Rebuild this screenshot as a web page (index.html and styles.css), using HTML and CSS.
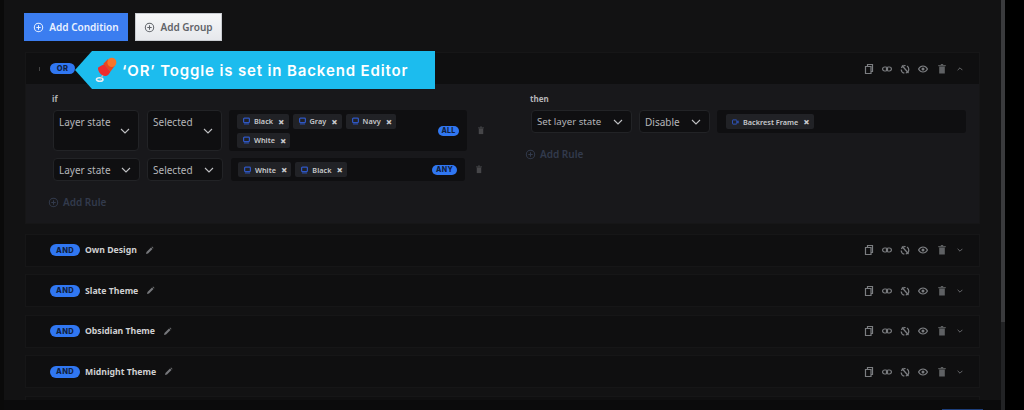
FILE: index.html
```html
<!DOCTYPE html>
<html lang="en">
<head>
    <meta charset="UTF-8">
    <meta name="viewport" content="width=device-width, initial-scale=1.0">
    <title>Conditional Logic</title>
    <link rel="stylesheet" href="styles.css">
</head>
<body>
    <svg class="icon-defs" width="0" height="0">
        <symbol id="i-plus" viewBox="0 0 12 12"><circle cx="6" cy="6" r="4.6" fill="none" stroke="currentColor" stroke-width="1.1"/><path d="M6 3.6v4.8M3.6 6h4.8" stroke="currentColor" stroke-width="1.1"/></symbol>
        <symbol id="i-copy" viewBox="0 0 10 10"><path d="M1.5 2.5h5.5v7h-5.5z" fill="none" stroke="currentColor" stroke-width="1.2"/><path d="M3.5 2.5v-2h5v7h-1.5" fill="none" stroke="currentColor" stroke-width="1.2"/></symbol>
        <symbol id="i-link" viewBox="0 0 10 10"><rect x=".6" y="3" width="5" height="4" rx="2" fill="none" stroke="currentColor" stroke-width="1.2"/><rect x="4.4" y="3" width="5" height="4" rx="2" fill="none" stroke="currentColor" stroke-width="1.2"/></symbol>
        <symbol id="i-nolink" viewBox="0 0 10 10"><circle cx="5" cy="5.3" r="3.8" fill="none" stroke="currentColor" stroke-width="1.2" stroke-dasharray="5 1.5"/><path d="M2 1.5l6.5 7.5" stroke="currentColor" stroke-width="1.2"/><path d="M3.5.8l2 .4-1 1.3z" fill="currentColor"/></symbol>
        <symbol id="i-eye" viewBox="0 0 10 10"><path d="M.5 5c1.2-2 2.8-3 4.5-3s3.3 1 4.5 3c-1.2 2-2.8 3-4.5 3s-3.3-1-4.5-3z" fill="none" stroke="currentColor" stroke-width="1.2"/><circle cx="5" cy="5" r="1.5" fill="currentColor"/></symbol>
        <symbol id="i-trash" viewBox="0 0 10 10"><path d="M2.2 2.5h5.6v7h-5.6z" fill="currentColor" opacity=".75"/><path d="M1.2 1.7h7.6M3.8.6h2.4" stroke="currentColor" stroke-width=".8"/></symbol>
        <symbol id="i-down" viewBox="0 0 10 6"><path d="M1 1l4 4 4-4" fill="none" stroke="currentColor" stroke-width="1.1"/></symbol>
        <symbol id="i-layer" viewBox="0 0 8 8"><rect x=".7" y=".7" width="6.6" height="5.2" rx="1" fill="none" stroke="currentColor" stroke-width="1.4"/><path d="M1 7.4h6" stroke="currentColor" stroke-width="1"/></symbol>
        <symbol id="i-video" viewBox="0 0 9 7"><rect x=".6" y=".8" width="5.6" height="5.4" rx=".6" fill="none" stroke="currentColor" stroke-width="1.2"/><path d="M6.5 3l2-1.5v4l-2-1.5z" fill="currentColor"/></symbol>
        <symbol id="i-pencil" viewBox="0 0 9 9"><path d="M1 8l.5-2 4.5-4.500 1.500 1.500-4.500 4.500z" fill="currentColor"/><path d="M6.500 1l.6-.5 1.400 1.400-.5.6z" fill="currentColor"/></symbol>
    </svg>

    <div class="panel">
        <div class="top-actions">
            <button class="btn btn-primary"><svg class="btn-icon"><use href="#i-plus"/></svg>Add Condition</button>
            <button class="btn btn-light"><svg class="btn-icon"><use href="#i-plus"/></svg>Add Group</button>
        </div>

        <div class="groups">
            <section class="group group-open">
                <header class="group-head">
                    <span class="caret-mini"></span>
                    <span class="pill pill-or">OR</span>
                    <div class="tools">
                        <svg class="tool"><use href="#i-copy"/></svg>
                        <svg class="tool"><use href="#i-link"/></svg>
                        <svg class="tool"><use href="#i-nolink"/></svg>
                        <svg class="tool"><use href="#i-eye"/></svg>
                        <svg class="tool"><use href="#i-trash"/></svg>
                        <svg class="tool tool-caret flip"><use href="#i-down"/></svg>
                    </div>
                </header>
                <div class="group-body">
                    <div class="col col-if">
                        <div class="col-label">if</div>
                        <div class="rule rule-tall">
                            <div class="select select-state"><span>Layer state</span><svg class="chev"><use href="#i-down"/></svg></div>
                            <div class="select select-cond"><span>Selected</span><svg class="chev"><use href="#i-down"/></svg></div>
                            <div class="tagbox">
                                <div class="tags">
                                    <span class="tag"><svg class="tag-icon"><use href="#i-layer"/></svg>Black<b class="x">×</b></span>
                                    <span class="tag"><svg class="tag-icon"><use href="#i-layer"/></svg>Gray<b class="x">×</b></span>
                                    <span class="tag"><svg class="tag-icon"><use href="#i-layer"/></svg>Navy<b class="x">×</b></span>
                                    <span class="tag"><svg class="tag-icon"><use href="#i-layer"/></svg>White<b class="x">×</b></span>
                                </div>
                                <span class="pill pill-all">ALL</span>
                            </div>
                            <svg class="rule-trash"><use href="#i-trash"/></svg>
                        </div>
                        <div class="rule rule-short">
                            <div class="select select-state"><span>Layer state</span><svg class="chev"><use href="#i-down"/></svg></div>
                            <div class="select select-cond"><span>Selected</span><svg class="chev"><use href="#i-down"/></svg></div>
                            <div class="tagbox">
                                <div class="tags">
                                    <span class="tag"><svg class="tag-icon"><use href="#i-layer"/></svg>White<b class="x">×</b></span>
                                    <span class="tag"><svg class="tag-icon"><use href="#i-layer"/></svg>Black<b class="x">×</b></span>
                                </div>
                                <span class="pill pill-any">ANY</span>
                            </div>
                            <svg class="rule-trash"><use href="#i-trash"/></svg>
                        </div>
                        <div class="add-rule"><svg class="btn-icon"><use href="#i-plus"/></svg>Add Rule</div>
                    </div>
                    <div class="col col-then">
                        <div class="col-label">then</div>
                        <div class="rule">
                            <div class="select select-action"><span>Set layer state</span><svg class="chev"><use href="#i-down"/></svg></div>
                            <div class="select select-value"><span>Disable</span><svg class="chev"><use href="#i-down"/></svg></div>
                            <div class="tagbox tagbox-wide">
                                <div class="tags">
                                    <span class="tag"><svg class="tag-icon"><use href="#i-video"/></svg>Backrest Frame<b class="x">×</b></span>
                                </div>
                            </div>
                        </div>
                        <div class="add-rule"><svg class="btn-icon"><use href="#i-plus"/></svg>Add Rule</div>
                    </div>
                </div>
            </section>

            <section class="group">
                <header class="group-head">
                    <span class="pill pill-and">AND</span><span class="group-name">Own Design</span><svg class="pencil"><use href="#i-pencil"/></svg>
                    <div class="tools">
                        <svg class="tool"><use href="#i-copy"/></svg><svg class="tool"><use href="#i-link"/></svg><svg class="tool"><use href="#i-nolink"/></svg><svg class="tool"><use href="#i-eye"/></svg><svg class="tool"><use href="#i-trash"/></svg><svg class="tool tool-caret"><use href="#i-down"/></svg>
                    </div>
                </header>
            </section>
            <section class="group">
                <header class="group-head">
                    <span class="pill pill-and">AND</span><span class="group-name">Slate Theme</span><svg class="pencil"><use href="#i-pencil"/></svg>
                    <div class="tools">
                        <svg class="tool"><use href="#i-copy"/></svg><svg class="tool"><use href="#i-link"/></svg><svg class="tool"><use href="#i-nolink"/></svg><svg class="tool"><use href="#i-eye"/></svg><svg class="tool"><use href="#i-trash"/></svg><svg class="tool tool-caret"><use href="#i-down"/></svg>
                    </div>
                </header>
            </section>
            <section class="group">
                <header class="group-head">
                    <span class="pill pill-and">AND</span><span class="group-name">Obsidian Theme</span><svg class="pencil"><use href="#i-pencil"/></svg>
                    <div class="tools">
                        <svg class="tool"><use href="#i-copy"/></svg><svg class="tool"><use href="#i-link"/></svg><svg class="tool"><use href="#i-nolink"/></svg><svg class="tool"><use href="#i-eye"/></svg><svg class="tool"><use href="#i-trash"/></svg><svg class="tool tool-caret"><use href="#i-down"/></svg>
                    </div>
                </header>
            </section>
            <section class="group">
                <header class="group-head">
                    <span class="pill pill-and">AND</span><span class="group-name">Midnight Theme</span><svg class="pencil"><use href="#i-pencil"/></svg>
                    <div class="tools">
                        <svg class="tool"><use href="#i-copy"/></svg><svg class="tool"><use href="#i-link"/></svg><svg class="tool"><use href="#i-nolink"/></svg><svg class="tool"><use href="#i-eye"/></svg><svg class="tool"><use href="#i-trash"/></svg><svg class="tool tool-caret"><use href="#i-down"/></svg>
                    </div>
                </header>
            </section>
            <section class="group group-cut"></section>
        </div>

        <div class="scrollbar"><div class="scroll-thumb"></div></div>
        <div class="footer-bar"><span class="footer-btn"></span></div>
    </div>

    <div class="callout">
        <svg class="pin" viewBox="0 0 24 30">
            <ellipse cx="5" cy="25" rx="3.6" ry="2" fill="none" stroke="#e8eef2" stroke-width="1.8"/>
            <path d="M5.5 25l5-8" stroke="#b9c4cc" stroke-width="1.4"/>
            <path d="M3 12c2-2 5-3 7-4l7 8c-1 2-3 5-5 5-4 1-9-4-9-9z" fill="#ee2d2d"/>
            <path d="M9 7.5l5-5 8 7-5 6.5z" fill="#e8481f"/>
            <ellipse cx="18.5" cy="6" rx="5" ry="5.2" fill="#f7752a"/>
        </svg>
        <span>‘OR’ Toggle is set in Backend Editor</span>
    </div>
</body>
</html>
```

FILE: styles.css
```css
* {
    margin: 0;
    padding: 0;
    box-sizing: border-box;
}

html, body {
    height: 410px;
    overflow: hidden;
}

body {
    background: #000;
    font-family: 'Noto Sans', 'Open Sans', sans-serif;
    position: relative;
}

.icon-defs {
    position: absolute;
}

.panel {
    position: relative;
    width: 1005px;
    height: 410px;
    padding: 13px 0 0 20px;
    background: #121213;
    border-left: 4px solid #0a0a0a;
    overflow: hidden;
}

.top-actions {
    display: flex;
    gap: 7px;
    margin-bottom: 11px;
}

.btn {
    display: flex;
    align-items: center;
    justify-content: center;
    gap: 5px;
    height: 28px;
    border: none;
    font-family: inherit;
    font-size: 10px;
    font-weight: 600;
}

.btn-primary {
    width: 104px;
    background: #3b7df0;
    color: #eaf1ff;
}

.btn-light {
    width: 87px;
    background: linear-gradient(#f6f7f8, #e6e8ec);
    border: 1px solid #c9ccd1;
    color: #5f6368;
}

.btn-icon {
    width: 11px;
    height: 11px;
    flex: none;
}

.groups {
    display: flex;
    flex-direction: column;
    gap: 7.6px;
    width: 955px;
    margin-left: 1px;
}

.group {
    background: #0f0f10;
    border: 1px solid #161617;
}

.group-open {
    margin-bottom: 2px;
}

.group-head {
    display: flex;
    align-items: center;
    height: 31px;
    padding-left: 24px;
}

.caret-mini {
    width: 1px;
    height: 4px;
    margin-left: -11px;
    margin-right: 10px;
    background: #444;
}

.pill {
    display: inline-flex;
    align-items: center;
    justify-content: center;
    flex: none;
    background: #3077f2;
    color: #10213f;
    border-radius: 6px;
    font-family: 'Inter', sans-serif;
    font-size: 7.5px;
    font-weight: 800;
    letter-spacing: .3px;
}

.pill-or {
    width: 25px;
    height: 11px;
}

.pill-and {
    width: 30px;
    height: 12px;
}

.pill-all {
    width: 21px;
    height: 10px;
    margin-right: 8px;
    font-size: 7px;
}

.pill-any {
    width: 25px;
    height: 10px;
    margin-right: 8px;
    font-size: 7px;
}

.group-name {
    margin-left: 5px;
    color: #cfd0d2;
    font-size: 8.7px;
    font-weight: 700;
}

.pencil {
    width: 9px;
    height: 9px;
    margin-left: 8px;
    color: #77787b;
}

.tools {
    display: flex;
    align-items: center;
    gap: 8.3px;
    margin-left: auto;
    margin-right: 16px;
    color: #7b7d80;
}

.tool {
    width: 10px;
    height: 10px;
}

.tool-caret {
    width: 6px;
    height: 4px;
    margin-left: 2px;
    color: #94969a;
}

.flip {
    transform: rotate(180deg);
}

.group-body {
    display: flex;
    height: 139px;
    background: #18181b;
}

.col-if {
    width: 478px;
    padding-left: 27px;
}

.col-then {
    padding-left: 27px;
    flex: 1;
}

.col-label {
    height: 11px;
    margin: 9px 0 6px -1px;
    color: #b4b5b8;
    font-size: 8px;
    font-weight: 700;
    line-height: 11px;
}

.rule {
    display: flex;
    align-items: center;
    gap: 7px;
    height: 23px;
    margin-bottom: 7px;
}

.rule-tall {
    height: 41px;
}

.select {
    display: flex;
    align-items: center;
    justify-content: space-between;
    align-self: stretch;
    padding: 0 8px 0 5px;
    background: #0f0f11;
    border: 1px solid #222326;
    border-radius: 4px;
    color: #b5b6b9;
    font-size: 10px;
    flex: none;
}

.rule-tall .select {
    align-items: flex-start;
    padding-top: 4px;
    width: 86px;
}

.rule-tall .select-state {
    margin-right: 1px;
}

.rule-tall .select-cond {
    width: 75px;
}

.rule-tall .chev {
    margin-top: 13px;
}

.rule-short .select-cond {
    margin-right: 1px;
}

.select-state {
    width: 87px;
}

.select-cond {
    width: 76px;
}

.select-action {
    width: 101px;
    font-size: 9.7px;
}

.select-value {
    width: 71px;
}

.chev {
    width: 10px;
    height: 6px;
    color: #c0c1c4;
    flex: none;
}

.tagbox {
    display: flex;
    align-items: center;
    justify-content: space-between;
    align-self: stretch;
    width: 234px;
    padding-left: 7px;
    background: #0f0f11;
    border-radius: 3px;
}

.rule-tall .tagbox {
    width: 238px;
    padding-left: 8px;
}

.tagbox-wide {
    width: 249px;
    padding-left: 9px;
}

.tags {
    display: flex;
    flex-wrap: wrap;
    gap: 4px;
    width: 170px;
}

.tag {
    display: inline-flex;
    align-items: center;
    height: 15px;
    padding: 0 4px 0 6px;
    background: #212226;
    border-radius: 2px;
    color: #c8c9cc;
    font-size: 7.3px;
    font-weight: 600;
    white-space: nowrap;
}

.tag-icon {
    width: 7px;
    height: 8px;
    margin-right: 4px;
    color: #2f57c4;
}

.x {
    margin-left: 5px;
    color: #c8c9cc;
    font-size: 11px;
    line-height: 9px;
}

.rule-trash {
    width: 8px;
    height: 9px;
    margin-left: 3px;
    color: #55565a;
}

.add-rule {
    display: flex;
    align-items: center;
    gap: 4px;
    margin: 14px 0 0 -6px;
    color: #323a4c;
    font-size: 10px;
    font-weight: 600;
}

.col-if .add-rule {
    margin: 14px 0 0 -5px;
}

.group-cut {
    height: 12px;
}

.scrollbar {
    position: absolute;
    top: 0;
    right: 0;
    bottom: 0;
    width: 4px;
    background: #222325;
}

.scroll-thumb {
    height: 322px;
    background: #3a3b3d;
}

.footer-bar {
    position: absolute;
    left: 0;
    right: 4px;
    top: 400px;
    height: 10px;
    background: #0b0b0c;
}

.footer-btn {
    position: absolute;
    left: 938px;
    top: 9px;
    width: 41px;
    height: 1px;
    background: #1d3f7d;
}

/* annotation sitting on top of the first group */
.callout {
    position: absolute;
    left: 75px;
    top: 51px;
    display: flex;
    align-items: center;
    width: 360px;
    height: 38px;
    padding-left: 20px;
    background: #1cbcee;
    clip-path: polygon(0 50%, 17px 0, 100% 0, 100% 100%, 17px 100%);
    color: #fff;
    font-family: 'Inter', sans-serif;
    font-size: 15px;
    font-weight: 600;
    letter-spacing: .86px;
}

.pin {
    width: 22px;
    height: 27px;
    margin-right: 5px;
    flex: none;
}
```
